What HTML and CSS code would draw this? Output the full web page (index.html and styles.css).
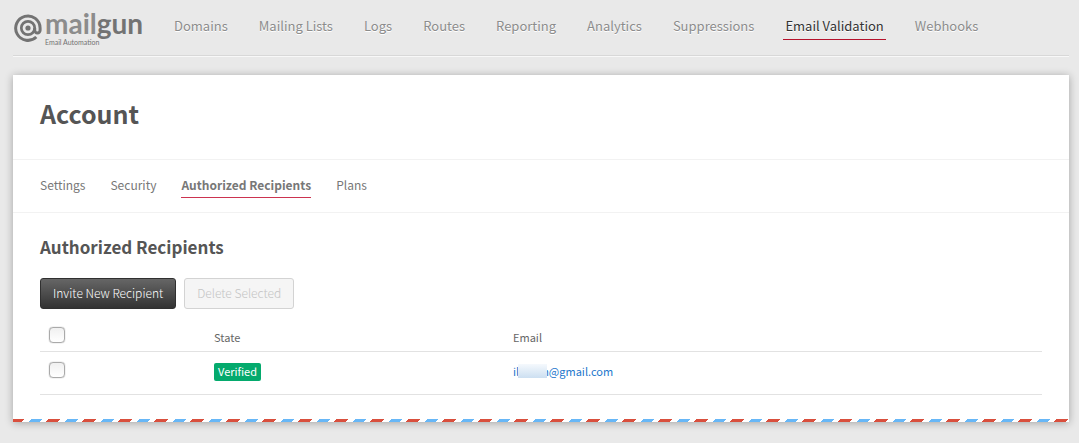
FILE: index.html
```html
<!DOCTYPE html>
<html lang="en">
<head>
<meta charset="utf-8">
<title>Mailgun - Authorized Recipients</title>
<link rel="stylesheet" href="styles.css">
</head>
<body>
<header class="topbar">
  <a class="logo" href="#" aria-label="Mailgun">
    <svg class="logo-at" viewBox="0 0 30 30" fill="none" stroke="#737373">
      <circle cx="15" cy="15" r="2.600" fill="#737373" stroke="none"/>
      <circle cx="15" cy="15" r="6.700" stroke-width="2.700"/>
      <path d="M21.700 15v2.200a2.700 2.700 0 0 0 5.400 0V15A12.200 12.200 0 1 0 23.300 24" stroke-width="3"/>
    </svg>
    <span class="wordmark">
      <span class="word"><span class="word-light">mail</span>gun</span>
      <span class="tagline">Email Automation</span>
    </span>
  </a>
  <nav class="main-nav">
    <a href="#">Domains</a>
    <a href="#">Mailing Lists</a>
    <a href="#">Logs</a>
    <a href="#">Routes</a>
    <a href="#">Reporting</a>
    <a href="#">Analytics</a>
    <a href="#">Suppressions</a>
    <a class="active" href="#">Email Validation</a>
    <a href="#">Webhooks</a>
  </nav>
</header>
<main class="card">
  <h1 class="title">Account</h1>
  <nav class="sub-nav">
    <a href="#">Settings</a>
    <a href="#">Security</a>
    <a class="active" href="#">Authorized Recipients</a>
    <a href="#">Plans</a>
  </nav>
  <section class="content">
    <h2 class="subtitle">Authorized Recipients</h2>
    <div class="actions">
      <button class="btn btn-dark" type="button">Invite New Recipient</button>
      <button class="btn" type="button" disabled>Delete Selected</button>
    </div>
    <table class="recipients">
      <thead>
        <tr>
          <th class="col-check"><input class="check" type="checkbox" aria-label="Select all"></th>
          <th class="col-state">State</th>
          <th>Email</th>
        </tr>
      </thead>
      <tbody>
        <tr>
          <td><input class="check" type="checkbox" aria-label="Select recipient"></td>
          <td><span class="badge">Verified</span></td>
          <td><a class="email" href="#">il<span class="redacted"></span>n@gmail.com</a></td>
        </tr>
      </tbody>
    </table>
  </section>
  <div class="airmail"></div>
</main>
</body>
</html>
```
FILE: styles.css
```css
* { box-sizing: border-box; }
body {
  margin: 0;
  padding: 0 10px 21px 13px;
  background: #e9e9e9;
  color: #555;
  font-family: "Noto Sans CJK JP", "Open Sans", sans-serif;
  font-size: 12px;
}
a { color: inherit; text-decoration: none; }
.topbar {
  display: flex;
  align-items: flex-start;
  height: 56px;
  margin-bottom: 19px;
  border-bottom: 1px solid #d8d8d8;
  box-shadow: 0 1px 0 #f8f8f8;
}
.logo { display: flex; flex: none; width: 159px; padding-top: 8px; color: #737373; }
.logo-at { width: 30px; height: 30px; margin-top: 5px; }
.wordmark { display: block; margin-left: 2px; font-family: Lato, sans-serif; }
.word { display: block; font-size: 28px; font-weight: 700; line-height: 30px; }
.word-light { color: #8c8c8c; }
.tagline { display: block; font-size: 7px; line-height: 8px; }
.main-nav { display: flex; gap: 27px; padding-top: 14px; }
.main-nav a {
  padding: 0 2px 2px;
  border-bottom: 1px solid transparent;
  color: #8c8c8c;
  font-size: 13px;
  line-height: 23px;
  text-shadow: 0 1px 0 #fff;
  white-space: nowrap;
}
.main-nav .active { border-color: #b5122c; color: #333; }
.card { background: #fff; box-shadow: 0 1px 8px rgba(0, 0, 0, .3); }
.title { margin: 0; padding: 18px 27px 26px; font-size: 25px; font-weight: 700; line-height: 40px; }
.sub-nav {
  display: flex;
  gap: 25px;
  padding: 14px 27px;
  border: solid #f2f2f2;
  border-width: 1px 0;
  color: #777;
}
.sub-nav a { padding-bottom: 2px; border-bottom: 1px solid transparent; line-height: 21px; }
.sub-nav .active { border-color: #cc3350; font-weight: 700; }
.content { padding: 20px 27px 24px; }
.subtitle { margin: 0 0 18px; font-size: 17px; font-weight: 700; line-height: 27px; }
.actions { display: flex; gap: 8px; margin-bottom: 11px; }
.btn {
  height: 31px;
  padding: 0 12px 3px;
  border: 1px solid #d3d3d3;
  border-radius: 3px;
  background: #f5f5f5;
  color: #c4c4c4;
  font: inherit;
  font-weight: 300;
}
.btn-dark { border-color: #303030; background: linear-gradient(#666, #333); color: #fff; }
.recipients { width: 100%; border-collapse: collapse; table-layout: fixed; font-size: 11px; }
.recipients th, .recipients td { padding: 0; border-bottom: 1px solid #e2e2e2; font-weight: 400; text-align: left; }
.recipients th { height: 31px; padding-top: 4px; color: #666; }
.recipients td { height: 43px; padding-bottom: 1px; }
.col-check { width: 174px; }
.col-state { width: 299px; }
.check {
  display: block;
  appearance: none;
  width: 16px;
  height: 16px;
  margin: 0 0 4px 9px;
  border: 1px solid #aaa;
  border-radius: 4px;
  background: linear-gradient(#f0f0f0, #fff);
  box-shadow: 0 0 1px #888;
}
.badge { display: inline-block; padding: 0 4px 1px; border-radius: 2px; background: #04aa6d; color: #fff; line-height: 17px; }
.email { color: #2277cc; }
.redacted {
  position: relative;
  display: inline-block;
  width: 29px;
  height: 14px;
  margin: 0 -5px 3px -1px;
  background: linear-gradient(#f5f9fd, #ccdff1);
  vertical-align: middle;
}
.airmail {
  height: 3px;
  background: linear-gradient(135deg, #fff 2px, #d94f3d 2px 10px, #fff 10px 15px, #67b7f7 15px 23px, #fff 23px) -3px 0 / 36px 3px;
}
```
